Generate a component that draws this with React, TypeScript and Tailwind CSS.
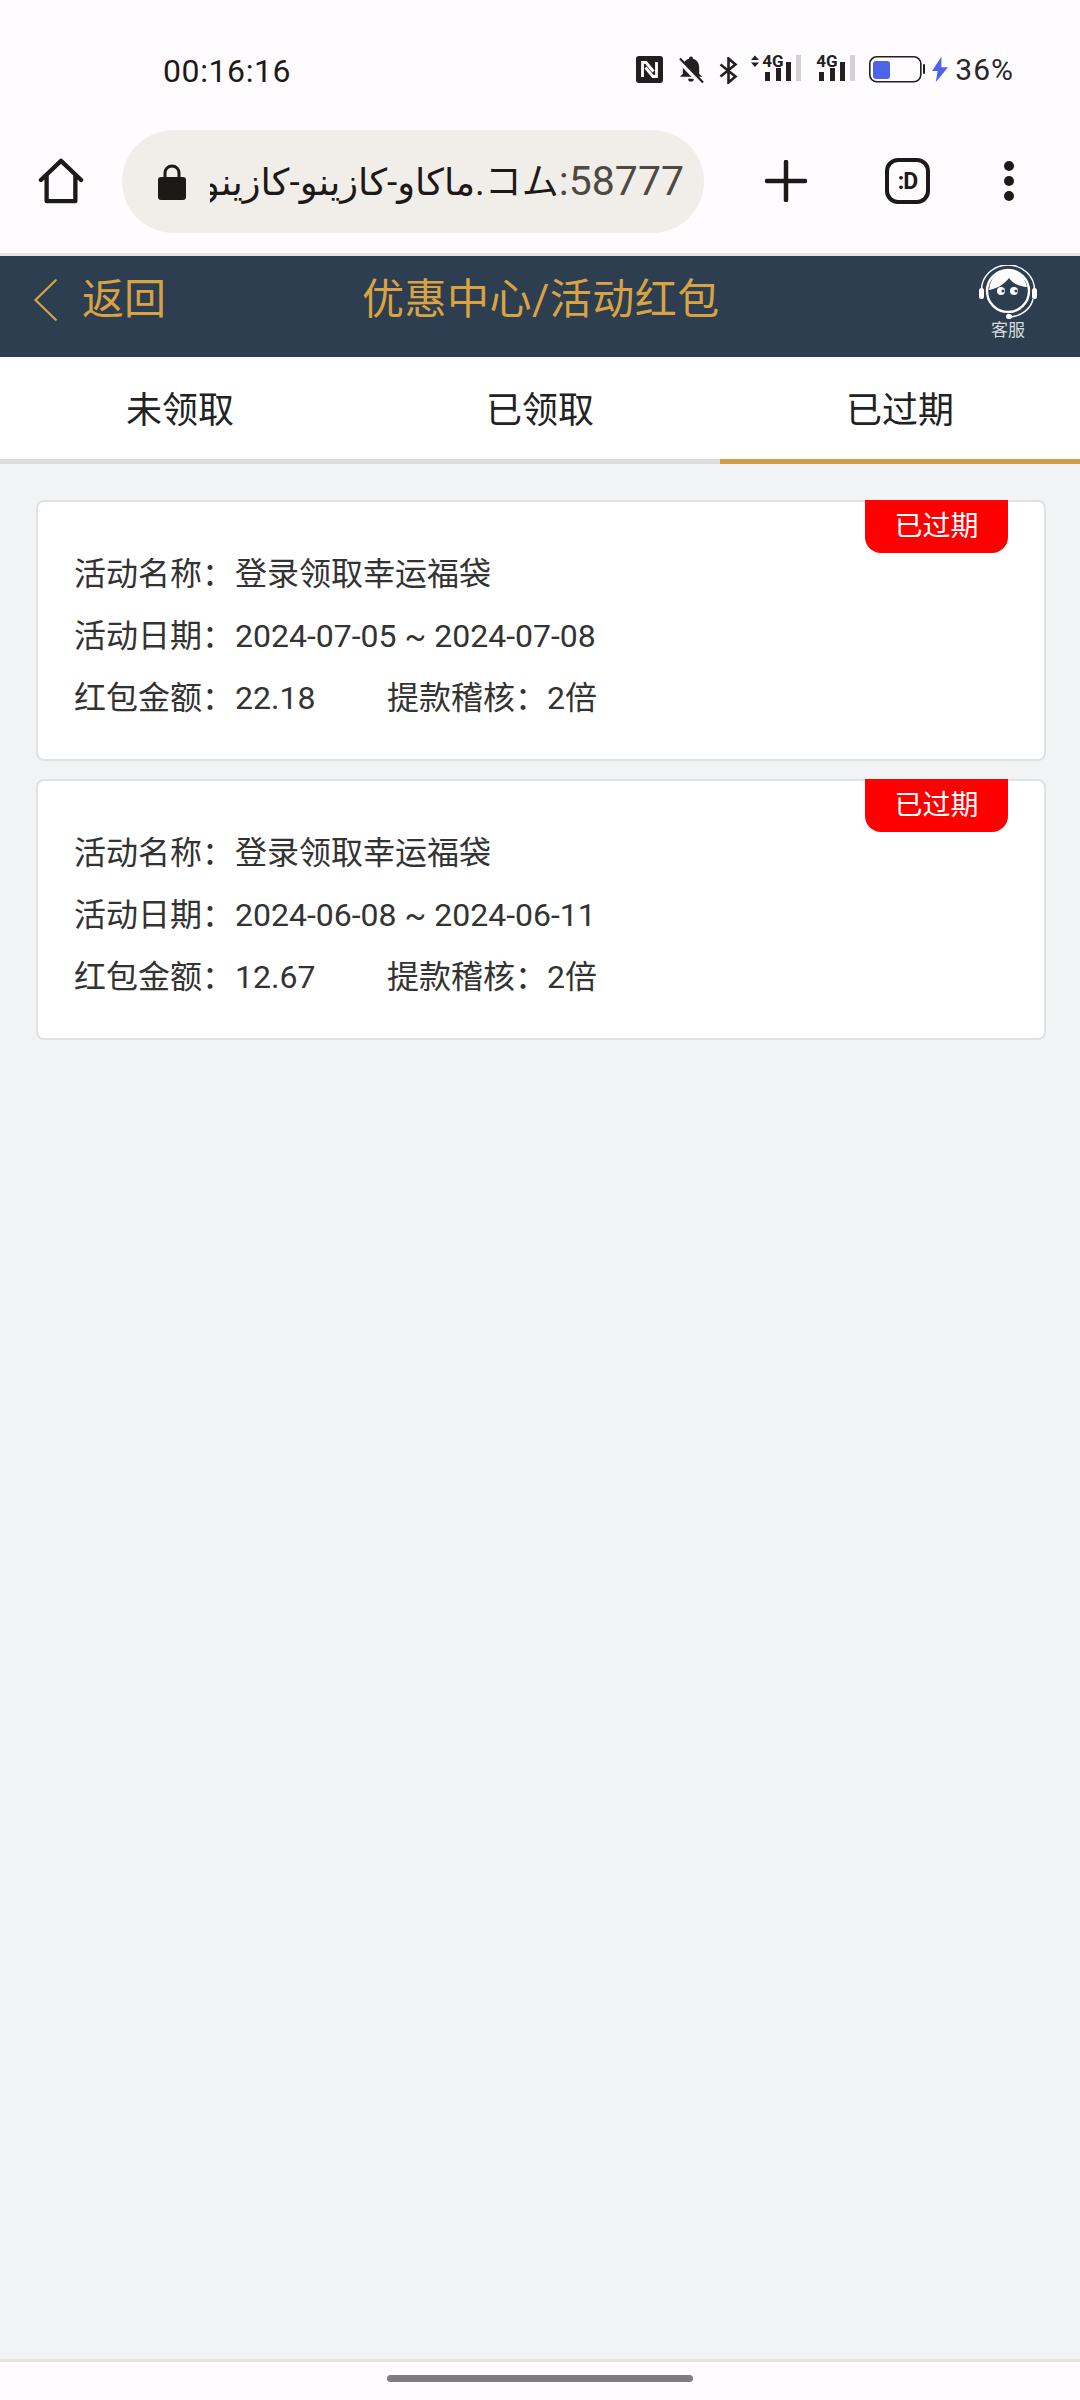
const sans = "font-['Roboto','Noto_Sans_CJK_SC',sans-serif]";

function StatusIcons() {
  return (
    <div className="flex items-start">
      {/* nfc */}
      <svg width="27" height="27" viewBox="0 0 27 27" className="mt-[1px]">
        <rect width="27" height="27" rx="3" fill="#221f1f" />
        <path d="M6.5 21V6.500h3.500l7.500 9M20.500 6v14.500H17l-7.500-9" fill="none" stroke="#fff" strokeWidth="2.8" />
      </svg>
      {/* muted bell */}
      <svg width="26" height="28" viewBox="0 0 27 28" className="ml-[15px] mt-[1px]">
        <path d="M13.5 0a2 2 0 0 1 2 2.2C20 3.300 22 7 22 11.500V18l3 3H2l3-3v-6.500C5 7 7 3.300 11.500 2.200A2 2 0 0 1 13.500 0ZM10.500 23h6a3 3 0 0 1-6 0Z" fill="#221f1f" />
        <path d="M1 4l24 25" stroke="#fffcff" strokeWidth="5" />
        <path d="M2 2l24 25" stroke="#221f1f" strokeWidth="2.2" />
      </svg>
      {/* bluetooth */}
      <svg width="19" height="27" viewBox="0 0 19 27" className="ml-[15px] mt-[2px]">
        <path d="M1.500 7.500l15 12-7 6V1.500l7 6-15 12" fill="none" stroke="#221f1f" strokeWidth="2.6" />
      </svg>
      {/* sim 1 */}
      <div className="relative ml-[13px] h-[26px] w-[50px]">
        <svg width="50" height="26" viewBox="0 0 50 26" className="absolute inset-0">
          <path d="M0 5l4-4.500L8 5ZM0 7.500l4 4.500 4-4.500Z" fill="#221f1f" />
          <rect x="14" y="17" width="5" height="9" fill="#221f1f" />
          <rect x="25" y="13" width="5" height="13" fill="#221f1f" />
          <rect x="35" y="7" width="5" height="19" fill="#221f1f" />
          <rect x="45" y="0" width="5" height="26" fill="#d4d0d3" />
        </svg>
        <span className="absolute left-[11px] top-[-3px] font-['Roboto',sans-serif] text-[17px] leading-[18px] font-bold text-[#221f1f]">4G</span>
      </div>
      {/* sim 2 */}
      <div className="relative ml-[15px] h-[26px] w-[39px]">
        <svg width="39" height="26" viewBox="0 0 39 26" className="absolute inset-0">
          <rect x="3" y="17" width="5" height="9" fill="#221f1f" />
          <rect x="14" y="13" width="5" height="13" fill="#221f1f" />
          <rect x="24" y="7" width="5" height="19" fill="#221f1f" />
          <rect x="34" y="0" width="5" height="26" fill="#d4d0d3" />
        </svg>
        <span className="absolute left-0 top-[-3px] font-['Roboto',sans-serif] text-[17px] leading-[18px] font-bold text-[#221f1f]">4G</span>
      </div>
      {/* battery */}
      <svg width="56" height="27" viewBox="0 0 56 27" className="ml-[14px] mt-[1px]">
        <rect x="0.800" y="0.800" width="51" height="25" rx="7" fill="none" stroke="#221f1f" strokeWidth="1.6" />
        <rect x="4" y="5" width="17" height="18" rx="3" fill="#4f63e7" />
        <rect x="54" y="8" width="2" height="10" rx="1" fill="#221f1f" />
      </svg>
      <svg width="16" height="27" viewBox="0 0 17 27" className="ml-[7px] mt-[1px]">
        <path d="M10 0L0 15h6l-2 12 13-16h-7Z" fill="#4f63e7" />
      </svg>
      <span className={`ml-[7px] mt-[1px] ${sans} text-[30px] leading-[28px] tracking-[1px] text-[#2a2727]`}>36%</span>
    </div>
  );
}

function BrowserBar() {
  return (
    <div className="flex h-[123px] items-start">
      <div className="flex h-[102px] w-[122px] items-center justify-center">
        <svg width="46" height="46" viewBox="0 0 48 48" fill="none" stroke="#1c1917" strokeWidth="4.5" strokeLinejoin="round" strokeLinecap="round">
          <path d="M3 23L24 3l21 20M9 18v27h30V18" />
        </svg>
      </div>
      <div className="flex h-[103px] w-[582px] items-center rounded-[52px] bg-[#f1eeea] pr-[20px] pl-[36px]">
        <svg width="28" height="36" viewBox="0 0 28 36" className="shrink-0">
          <path d="M7 15V9a7 7 0 0 1 14 0v6" fill="none" stroke="#1c1917" strokeWidth="3" />
          <rect y="13" width="28" height="23" rx="3" fill="#1c1917" />
        </svg>
        <div className="ml-[24px] flex min-w-0 flex-1 justify-end overflow-hidden font-['Roboto','DejaVu_Sans','Noto_Sans_CJK_JP',sans-serif] text-[41px] leading-[52px] whitespace-nowrap text-[#1c1917]">
          <span>
            <span className="text-[37px]">ماكاو-كازينو-كازينو.コム</span>
            <span className="text-[#4d4a42]">:58777</span>
          </span>
        </div>
      </div>
      <div className="flex h-[102px] flex-1 items-center pl-[61px]">
        <svg width="42" height="42" viewBox="0 0 42 42" stroke="#1c1917" strokeWidth="4.5" strokeLinecap="round">
          <path d="M21 2v38M2 21h38" />
        </svg>
        <div className="ml-[78px] flex h-[46px] w-[45px] items-center justify-center rounded-[13px] border-[4.5px] border-[#1c1917] font-['Roboto',sans-serif] text-[23px] leading-none font-bold tracking-[-1px] text-[#1c1917]">
          :D
        </div>
        <div className="ml-[74px] flex flex-col gap-[5px]">
          <div className="h-[10px] w-[10px] rounded-full bg-[#1c1917]" />
          <div className="h-[10px] w-[10px] rounded-full bg-[#1c1917]" />
          <div className="h-[10px] w-[10px] rounded-full bg-[#1c1917]" />
        </div>
      </div>
    </div>
  );
}

function NavBar() {
  return (
    <div className={`relative flex h-[101px] items-center bg-[#2c3e50] pb-[13px] ${sans}`}>
      <svg width="26" height="44" viewBox="0 0 26 44" fill="none" stroke="#d9a343" strokeWidth="2.2" className="ml-[33px]">
        <path d="M23.500 1.500L2.500 22l21 20.500" />
      </svg>
      <span className="ml-[23px] text-[42px] leading-none text-[#d9a343]">返回</span>
      <span className="absolute left-[362px] text-[42px] leading-none tracking-[0.5px] text-[#d9a343]">优惠中心/活动红包</span>
      <div className="ml-auto mr-[42px] mt-[4px] flex w-[60px] flex-col items-center">
        <svg width="58" height="56" viewBox="0 0 58 56" fill="none" stroke="#fff">
          <path d="M2.500 25a26 24.500 0 0 1 53 0" strokeWidth="1.4" />
          <circle cx="29" cy="26" r="21" strokeWidth="2.4" />
          <path d="M10 25c6-1 14-4 20-12 3 5 11 9 18 9-2-10-9-17-19-17S11 13 10 25Z" fill="#fff" stroke="none" />
          <circle cx="22" cy="26" r="4" fill="#fff" stroke="none" />
          <circle cx="35" cy="26" r="4" fill="#fff" stroke="none" />
          <circle cx="24" cy="26" r="1.500" fill="#2c3e50" stroke="none" />
          <circle cx="37" cy="26" r="1.500" fill="#2c3e50" stroke="none" />
          <rect x="0" y="23" width="5" height="11" rx="2.500" fill="#fff" stroke="none" />
          <rect x="53" y="23" width="5" height="11" rx="2.500" fill="#fff" stroke="none" />
          <path d="M54 34c-2 10-12 17-22 18" strokeWidth="1.4" />
          <rect x="27" y="49" width="6" height="5" rx="2.500" fill="#fff" stroke="none" />
        </svg>
        <span className="text-[17px] leading-[18px] text-[#d5dade]">客服</span>
      </div>
    </div>
  );
}

function Tabs() {
  const tabs = ["未领取", "已领取", "已过期"];
  return (
    <div className={`flex h-[107px] bg-white ${sans}`}>
      {tabs.map((t, i) => (
        <div
          key={t}
          className={`flex flex-1 items-center justify-center border-b-[5px] pt-[5px] text-[36px] leading-none text-[#222222] ${i === 2 ? "border-[#d19f4c]" : "border-[#dddddd]"}`}
        >
          {t}
        </div>
      ))}
    </div>
  );
}

function RedPacketCard({ date, amount }: { date: string; amount: string }) {
  return (
    <div className={`relative h-[261px] rounded-[8px] border-2 border-[#dfe1e4] bg-white pt-[41px] pl-[36px] text-[32px] leading-[62px] whitespace-nowrap text-[#333333] ${sans}`}>
      <div className="absolute top-[-2px] right-[36px] flex h-[53px] w-[143px] items-center justify-center rounded-b-[16px] bg-[#ff0000] text-[28px] leading-none text-[#fff]">
        已过期
      </div>
      <div className="flex"><span className="w-[161px]">活动名称：</span><span>登录领取幸运福袋</span></div>
      <div className="flex"><span className="w-[161px]">活动日期：</span><span>{date}</span></div>
      <div className="flex">
        <span className="w-[161px]">红包金额：</span>
        <span className="w-[152px]">{amount}</span>
        <span className="w-[160px]">提款稽核：</span>
        <span>2倍</span>
      </div>
    </div>
  );
}

export default function App() {
  return (
    <div className="flex h-[2400px] w-[1080px] flex-col overflow-hidden bg-[#fffcff]">
      {/* system status bar */}
      <div className="flex h-[130px] items-start justify-between pt-[55px] pr-[66px] pl-[163px]">
        <span className={`${sans} text-[32px] leading-[32px] tracking-[0.6px] text-[#1c1917]`}>00:16:16</span>
        <StatusIcons />
      </div>
      <BrowserBar />
      <div className="h-[3px] bg-[#e9e4da]" />
      <NavBar />
      <Tabs />
      <main className="flex flex-1 flex-col gap-[18px] bg-[#f2f3f5] pt-[36px] pr-[34px] pl-[36px]">
        <RedPacketCard date="2024-07-05 ~ 2024-07-08" amount="22.18" />
        <RedPacketCard date="2024-06-08 ~ 2024-06-11" amount="12.67" />
      </main>
      <div className="h-[3px] bg-[#e9e4da]" />
      <div className="flex h-[38px] justify-center bg-[#fffcff] pt-[13px]">
        <div className="h-[7px] w-[306px] rounded-full bg-[#7f7b7e]" />
      </div>
    </div>
  );
}
